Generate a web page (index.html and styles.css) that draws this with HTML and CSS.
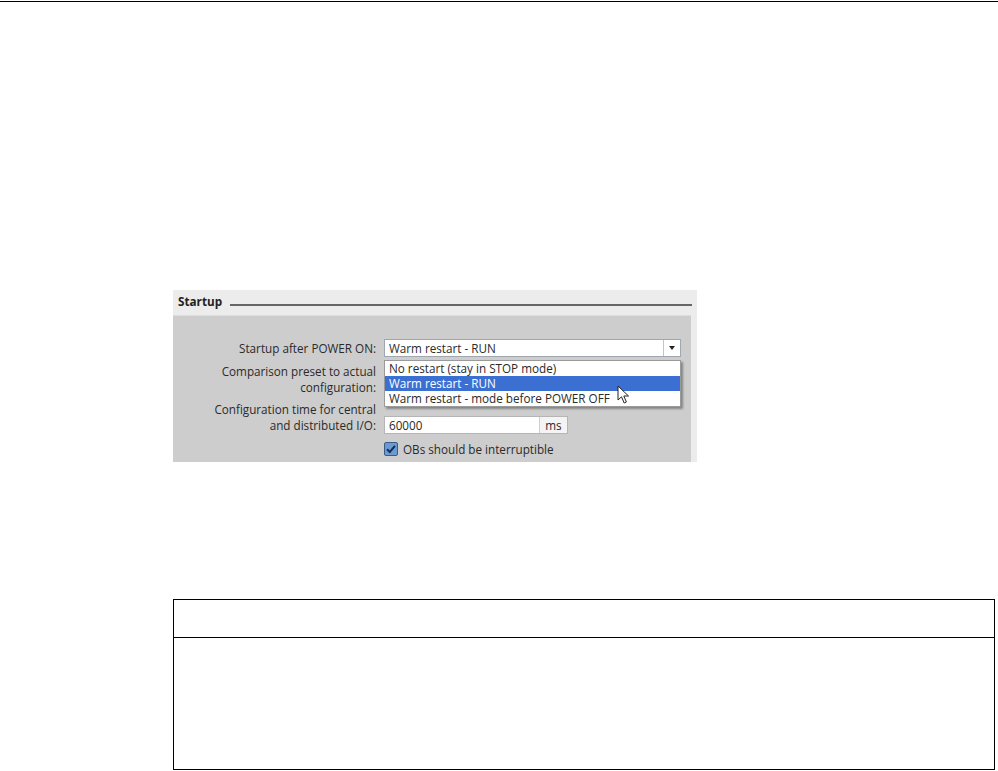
FILE: index.html
```html
<!DOCTYPE html>
<html lang="en">
<head>
    <meta charset="UTF-8">
    <title>Startup</title>
    <link rel="stylesheet" href="styles.css">
</head>
<body>
    <div class="page-rule"></div>

    <div class="figure">
        <div class="panel-head">
            <span class="panel-title">Startup</span>
            <span class="panel-line"></span>
        </div>
        <div class="panel-body">
            <div class="row row-first">
                <div class="label">Startup after POWER ON:</div>
                <div class="select">
                    <span class="select-text">Warm restart - RUN</span>
                    <span class="select-btn"><span class="arrow"></span></span>
                </div>
            </div>
            <div class="row row-second">
                <div class="label">Comparison preset to actual<br>configuration:</div>
            </div>
            <div class="row row-third">
                <div class="label">Configuration time for central<br>and distributed I/O:</div>
                <div class="field">
                    <span class="field-value">60000</span>
                    <span class="field-unit">ms</span>
                </div>
            </div>
            <div class="row row-fourth">
                <div class="label"></div>
                <div class="check">
                    <svg width="14" height="14" viewBox="0 0 14 14">
                        <rect x="0.5" y="0.5" width="13" height="13" rx="1.5" fill="#6b9bd2" stroke="#3b5b86"/>
                        <path d="M3 7.2 L5.8 10 L11 3.8" fill="none" stroke="#14305a" stroke-width="2"/>
                    </svg>
                    <span>OBs should be interruptible</span>
                </div>
            </div>

            <ul class="dropdown">
                <li>No restart (stay in STOP mode)</li>
                <li class="selected">Warm restart - RUN</li>
                <li>Warm restart - mode before POWER OFF</li>
            </ul>

            <svg class="cursor" width="14" height="20" viewBox="0 0 14 20">
                <path d="M1 1 L1 15 L4.5 11.8 L7.2 18 L9.4 17 L6.8 11 L11.5 11 Z" fill="#fff" stroke="#222" stroke-width="1"/>
            </svg>
        </div>
    </div>

    <div class="note">
        <div class="note-head"></div>
        <div class="note-body"></div>
    </div>
</body>
</html>
```

FILE: styles.css
```css
body {
    margin: 0;
    background: #fff;
    font-family: "Open Sans", "Noto Sans", sans-serif;
}

.page-rule {
    height: 1px;
    margin-top: 1px;
    background: #000;
}

.figure {
    width: 524px;
    margin: 288px 0 0 173px;
    background: #ececec;
    font-size: 11.7px;
    color: #2a2a2a;
}

.panel-head {
    display: flex;
    align-items: center;
    height: 25px;
    padding: 0 5px 0 5px;
}

.panel-title {
    font-weight: bold;
    font-size: 11.7px;
    color: #222;
    margin-top: -4px;
}

.panel-line {
    flex: 1;
    height: 2px;
    margin: 4px 0 0 8px;
    background: #666;
}

.panel-body {
    position: relative;
    height: 146px;
    margin-right: 6px;
    background: #cdcdcd;
    border-top: 1px solid #dedede;
}

.row {
    display: flex;
    align-items: flex-end;
}

.label {
    width: 203px;
    text-align: right;
    line-height: 16px;
    flex-shrink: 0;
}

.row-first {
    margin-top: 23px;
    align-items: center;
}

.row-second {
    margin-top: 6px;
}

.row-third {
    margin-top: 6px;
}

.row-fourth {
    margin-top: 8px;
}

.select {
    display: flex;
    width: 295px;
    height: 16px;
    margin-left: 8px;
    background: #fff;
    border: 1px solid #a0a7b0;
}

.select-text {
    flex: 1;
    padding-left: 4px;
    line-height: 16px;
}

.select-btn {
    display: flex;
    align-items: center;
    justify-content: center;
    width: 16px;
    border-left: 1px solid #c4c4c4;
}

.arrow {
    width: 0;
    height: 0;
    border-left: 3px solid transparent;
    border-right: 3px solid transparent;
    border-top: 4px solid #222;
}

.field {
    display: flex;
    width: 182px;
    height: 16px;
    margin-left: 8px;
    margin-bottom: -1px;
    background: #fff;
    border: 1px solid #b5b5b5;
}

.field-value {
    flex: 1;
    padding-left: 4px;
    line-height: 16px;
}

.field-unit {
    width: 27px;
    text-align: center;
    line-height: 16px;
    background: #f4f4f4;
    border-left: 1px solid #d0d0d0;
}

.check {
    display: flex;
    align-items: center;
    gap: 5px;
    margin-left: 8px;
}

.dropdown {
    position: absolute;
    left: 211px;
    top: 44px;
    width: 295px;
    margin: 0;
    padding: 0;
    list-style: none;
    background: #fff;
    border: 1px solid #9a9a9a;
    box-shadow: 2px 2px 2px rgba(0, 0, 0, 0.35);
}

.dropdown li {
    height: 15px;
    line-height: 15px;
    padding-left: 4px;
}

.dropdown li.selected {
    background: #3c6fd2;
    color: #fff;
}

.cursor {
    position: absolute;
    left: 444px;
    top: 69px;
}

.note {
    width: 820px;
    margin: 137px 0 0 173px;
    border: 1px solid #000;
}

.note-head {
    height: 37px;
    border-bottom: 1px solid #000;
}

.note-body {
    height: 131px;
}
```
